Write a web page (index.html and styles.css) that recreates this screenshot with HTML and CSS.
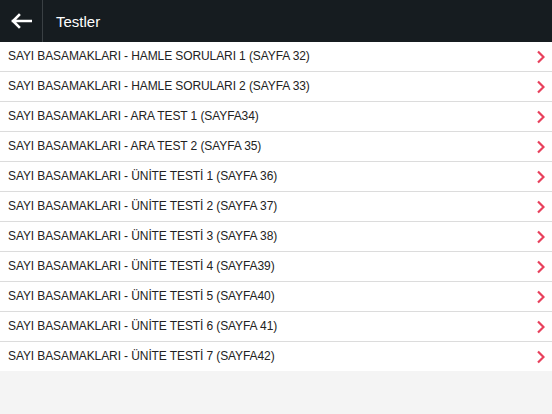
FILE: index.html
```html
<!DOCTYPE html>
<html>
<head>
<meta charset="utf-8">
<link rel="stylesheet" href="styles.css">
</head>
<body>
<header class="bar">
  <div class="back">
    <svg width="22" height="16" viewBox="0 0 22 16"><path d="M21 8H3M9 2L3 8l6 6" fill="none" stroke="#fff" stroke-width="2.6" stroke-linecap="square"/></svg>
  </div>
  <div class="title">Testler</div>
</header>
<ul class="list">
  <li class="row"><span>SAYI BASAMAKLARI - HAMLE SORULARI 1 (SAYFA 32)</span><svg class="chev" width="9" height="14" viewBox="0 0 9 14"><path d="M2 1.5l5.5 5.5L2 12.5" fill="none" stroke="#e8405c" stroke-width="2.2"/></svg></li>
  <li class="row"><span>SAYI BASAMAKLARI - HAMLE SORULARI 2 (SAYFA 33)</span><svg class="chev" width="9" height="14" viewBox="0 0 9 14"><path d="M2 1.5l5.5 5.5L2 12.5" fill="none" stroke="#e8405c" stroke-width="2.2"/></svg></li>
  <li class="row"><span>SAYI BASAMAKLARI - ARA TEST 1 (SAYFA34)</span><svg class="chev" width="9" height="14" viewBox="0 0 9 14"><path d="M2 1.5l5.5 5.5L2 12.5" fill="none" stroke="#e8405c" stroke-width="2.2"/></svg></li>
  <li class="row"><span>SAYI BASAMAKLARI - ARA TEST 2 (SAYFA 35)</span><svg class="chev" width="9" height="14" viewBox="0 0 9 14"><path d="M2 1.5l5.5 5.5L2 12.5" fill="none" stroke="#e8405c" stroke-width="2.2"/></svg></li>
  <li class="row"><span>SAYI BASAMAKLARI - ÜNİTE TESTİ 1 (SAYFA 36)</span><svg class="chev" width="9" height="14" viewBox="0 0 9 14"><path d="M2 1.5l5.5 5.5L2 12.5" fill="none" stroke="#e8405c" stroke-width="2.2"/></svg></li>
  <li class="row"><span>SAYI BASAMAKLARI - ÜNİTE TESTİ 2 (SAYFA 37)</span><svg class="chev" width="9" height="14" viewBox="0 0 9 14"><path d="M2 1.5l5.5 5.5L2 12.5" fill="none" stroke="#e8405c" stroke-width="2.2"/></svg></li>
  <li class="row"><span>SAYI BASAMAKLARI - ÜNİTE TESTİ 3 (SAYFA 38)</span><svg class="chev" width="9" height="14" viewBox="0 0 9 14"><path d="M2 1.5l5.5 5.5L2 12.5" fill="none" stroke="#e8405c" stroke-width="2.2"/></svg></li>
  <li class="row"><span>SAYI BASAMAKLARI - ÜNİTE TESTİ 4 (SAYFA39)</span><svg class="chev" width="9" height="14" viewBox="0 0 9 14"><path d="M2 1.5l5.5 5.5L2 12.5" fill="none" stroke="#e8405c" stroke-width="2.2"/></svg></li>
  <li class="row"><span>SAYI BASAMAKLARI - ÜNİTE TESTİ 5 (SAYFA40)</span><svg class="chev" width="9" height="14" viewBox="0 0 9 14"><path d="M2 1.5l5.5 5.5L2 12.5" fill="none" stroke="#e8405c" stroke-width="2.2"/></svg></li>
  <li class="row"><span>SAYI BASAMAKLARI - ÜNİTE TESTİ 6 (SAYFA 41)</span><svg class="chev" width="9" height="14" viewBox="0 0 9 14"><path d="M2 1.5l5.5 5.5L2 12.5" fill="none" stroke="#e8405c" stroke-width="2.2"/></svg></li>
  <li class="row"><span>SAYI BASAMAKLARI - ÜNİTE TESTİ 7 (SAYFA42)</span><svg class="chev" width="9" height="14" viewBox="0 0 9 14"><path d="M2 1.5l5.5 5.5L2 12.5" fill="none" stroke="#e8405c" stroke-width="2.2"/></svg></li>
</ul>
</body>
</html>
```
FILE: styles.css
```css
html, body {
  margin: 0;
  padding: 0;
  background: #f4f4f4;
  font-family: "Liberation Sans", Arial, sans-serif;
}
.bar {
  height: 42px;
  background: #161c20;
  display: flex;
  align-items: stretch;
}
.back {
  width: 43px;
  border-right: 1px solid #3a4044;
  display: flex;
  align-items: center;
  justify-content: center;
  box-sizing: border-box;
}
.title {
  color: #fff;
  font-size: 15px;
  display: flex;
  align-items: center;
  padding-left: 13px;
}
.list {
  list-style: none;
  margin: 0;
  padding: 0;
  background: #fff;
}
.row {
  height: 29px;
  border-bottom: 1px solid #dcdcdc;
  display: flex;
  align-items: center;
  justify-content: space-between;
  padding: 0 8px;
  font-size: 12px;
  color: #222;
}
.row span {
  letter-spacing: -0.1px;
  margin-top: -1px;
}
.row:last-child {
  border-bottom: none;
}
.chev {
  margin-right: -1px;
}
```
